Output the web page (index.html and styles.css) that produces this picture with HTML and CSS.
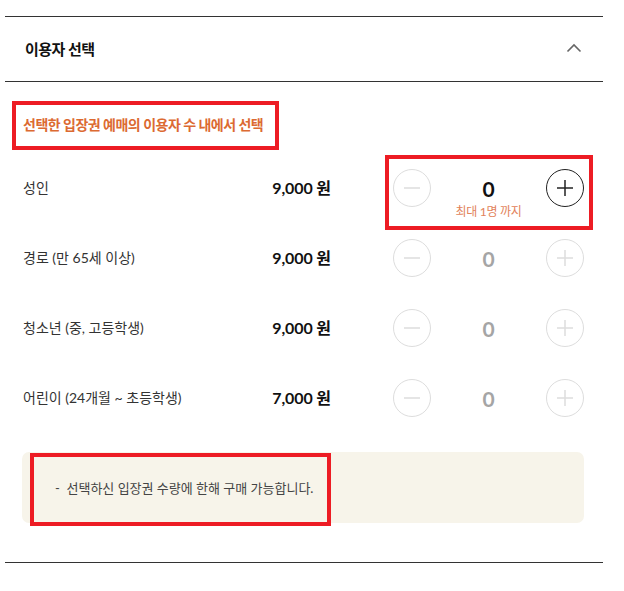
FILE: index.html
```html
<!DOCTYPE html>
<html lang="ko">
  <head>
    <meta charset="UTF-8" />
    <meta name="viewport" content="width=device-width, initial-scale=1.0" />
    <title>이용자 선택</title>
    <link rel="stylesheet" href="styles.css">
  </head>
  <body>
    <div class="panel">
      <div class="panel-head">
        <h3>이용자 선택</h3>
        <svg class="chevron" width="16" height="10" viewBox="0 0 16 10">
          <polyline points="1.5,8.5 8,2 14.5,8.5" fill="none" stroke="#666" stroke-width="1.6" />
        </svg>
      </div>

      <div class="panel-body">
        <p class="guide">선택한 입장권 예매의 이용자 수 내에서 선택</p>

        <div class="rows">
          <div class="row">
            <span class="label">성인</span>
            <span class="price">9,000 원</span>
            <div class="stepper boxed">
              <div class="controls">
                <button class="circle off">
                  <svg width="18" height="18" viewBox="0 0 18 18"><line x1="1" y1="9" x2="17" y2="9" stroke="#ddd" stroke-width="1.5" /></svg>
                </button>
                <span class="count">0</span>
                <button class="circle on">
                  <svg width="18" height="18" viewBox="0 0 18 18"><line x1="1" y1="9" x2="17" y2="9" stroke="#222" stroke-width="1.5" /><line x1="9" y1="1" x2="9" y2="17" stroke="#222" stroke-width="1.5" /></svg>
                </button>
              </div>
              <p class="limit">최대 1명 까지</p>
            </div>
          </div>

          <div class="row">
            <span class="label">경로 (만 65세 이상)</span>
            <span class="price">9,000 원</span>
            <div class="stepper">
              <div class="controls">
                <button class="circle off">
                  <svg width="18" height="18" viewBox="0 0 18 18"><line x1="1" y1="9" x2="17" y2="9" stroke="#ddd" stroke-width="1.5" /></svg>
                </button>
                <span class="count dim">0</span>
                <button class="circle off">
                  <svg width="18" height="18" viewBox="0 0 18 18"><line x1="1" y1="9" x2="17" y2="9" stroke="#ddd" stroke-width="1.5" /><line x1="9" y1="1" x2="9" y2="17" stroke="#ddd" stroke-width="1.5" /></svg>
                </button>
              </div>
            </div>
          </div>

          <div class="row">
            <span class="label">청소년 (중, 고등학생)</span>
            <span class="price">9,000 원</span>
            <div class="stepper">
              <div class="controls">
                <button class="circle off">
                  <svg width="18" height="18" viewBox="0 0 18 18"><line x1="1" y1="9" x2="17" y2="9" stroke="#ddd" stroke-width="1.5" /></svg>
                </button>
                <span class="count dim">0</span>
                <button class="circle off">
                  <svg width="18" height="18" viewBox="0 0 18 18"><line x1="1" y1="9" x2="17" y2="9" stroke="#ddd" stroke-width="1.5" /><line x1="9" y1="1" x2="9" y2="17" stroke="#ddd" stroke-width="1.5" /></svg>
                </button>
              </div>
            </div>
          </div>

          <div class="row">
            <span class="label">어린이 (24개월 ~ 초등학생)</span>
            <span class="price">7,000 원</span>
            <div class="stepper">
              <div class="controls">
                <button class="circle off">
                  <svg width="18" height="18" viewBox="0 0 18 18"><line x1="1" y1="9" x2="17" y2="9" stroke="#ddd" stroke-width="1.5" /></svg>
                </button>
                <span class="count dim">0</span>
                <button class="circle off">
                  <svg width="18" height="18" viewBox="0 0 18 18"><line x1="1" y1="9" x2="17" y2="9" stroke="#ddd" stroke-width="1.5" /><line x1="9" y1="1" x2="9" y2="17" stroke="#ddd" stroke-width="1.5" /></svg>
                </button>
              </div>
            </div>
          </div>
        </div>

        <div class="notice">
          <p>-&nbsp; 선택하신 입장권 수량에 한해 구매 가능합니다.</p>
          <div class="mark"></div>
        </div>
      </div>
    </div>
  </body>
</html>
```

FILE: styles.css
```css
body {
  margin: 0;
  background: #fff;
  font-family: Lato, "Noto Sans CJK KR", sans-serif;
  color: #222;
}
.panel {
  width: 598px;
  margin: 16px 0 0 5px;
  border-top: 1px solid #333;
  border-bottom: 1px solid #333;
}
.panel-head {
  display: flex;
  align-items: center;
  justify-content: space-between;
  height: 62px;
  padding: 0 21px 2px 20px;
  border-bottom: 1px solid #333;
}
.panel-head h3 {
  margin: 0;
  font-size: 15px;
  font-weight: 700;
  letter-spacing: -0.5px;
  color: #111;
}
.panel-body {
  padding: 19px 0 39px;
}
.guide {
  display: inline-block;
  margin: 0 0 0 7px;
  padding: 10px 12px 11px 7px;
  border: 4px solid #ed1c24;
  font-size: 14px;
  line-height: 20px;
  font-weight: 700;
  letter-spacing: -0.5px;
  color: #dc6a32;
}
.rows {
  display: flex;
  flex-direction: column;
  gap: 32px;
  margin-top: 19px;
  padding: 0 19px 0 18px;
}
.row {
  display: flex;
  align-items: flex-start;
  height: 38px;
}
.label {
  flex: 1;
  font-size: 14px;
  line-height: 38px;
  color: #333;
}
.price {
  font-size: 16px;
  font-weight: 700;
  line-height: 38px;
  letter-spacing: -0.1px;
  color: #111;
  margin-right: 62px;
}
.stepper {
  width: 191px;
}
.stepper.boxed {
  margin: -14px -9px 0 -8px;
  padding: 10px 5px 6px 4px;
  border: 4px solid #ed1c24;
  position: relative;
  z-index: 1;
}
.controls {
  display: flex;
  align-items: center;
  justify-content: space-between;
}
.circle {
  display: flex;
  align-items: center;
  justify-content: center;
  width: 38px;
  height: 38px;
  padding: 0;
  border-radius: 50%;
  background: #fff;
}
.circle.off {
  border: 1px solid #ddd;
}
.circle.on {
  border: 1px solid #222;
}
.count {
  font-size: 21px;
  font-weight: 700;
  color: #111;
}
.count.dim {
  color: #a5a5a5;
}
.limit {
  margin: -3px 0 0;
  text-align: center;
  font-size: 12px;
  line-height: 16px;
  color: #e2825a;
  letter-spacing: -0.3px;
}
.notice {
  position: relative;
  margin: 35px 19px 0 17px;
  height: 71px;
  display: flex;
  align-items: center;
  padding-left: 33px;
  background: #f7f4ea;
  border-radius: 7px;
}
.notice p {
  margin: 0;
  font-size: 13px;
  color: #444;
}
.notice .mark {
  position: absolute;
  left: 8px;
  top: 1px;
  width: 293px;
  height: 65px;
  border: 4px solid #ed1c24;
}
```
